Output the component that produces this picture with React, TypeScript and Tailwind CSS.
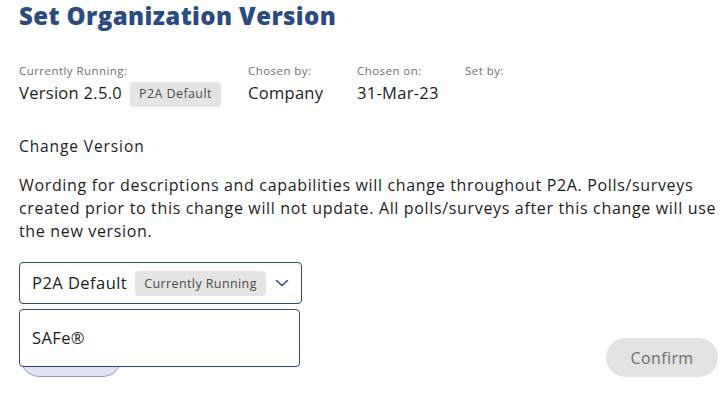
import type { ReactElement } from "react";

const font = { fontFamily: '"Open Sans", "Liberation Sans", sans-serif' };

function InfoCol({ label, width, children }: { label: string; width: string; children?: React.ReactNode }) {
  return (
    <div className={`flex flex-col ${width}`}>
      <span className="text-[11.5px] leading-[16px] tracking-[0.45px] text-[#6f6f6f]">{label}</span>
      <div className="mt-[2px] flex h-[25px] items-center text-[16.5px] tracking-[0.3px] text-[#1c1c1c]">{children}</div>
    </div>
  );
}

function Badge({ text }: { text: string }) {
  return (
    <span className="inline-flex h-[25px] items-center rounded-[4px] bg-[#e4e4e4] px-[9px] text-[12.5px] tracking-[0.4px] text-[#4a4a4a]">
      {text}
    </span>
  );
}

function App(): ReactElement {
  return (
    <div className="h-[395px] w-[728px] overflow-hidden bg-white px-[19px] pt-[1px] text-[#1c1c1c]" style={font}>
      <h1 className="text-[24px] font-extrabold leading-[29px] tracking-[0.4px] text-[#2b4a7f]">
        Set Organization Version
      </h1>

      {/* current version info */}
      <div className="mt-[33px] flex">
        <InfoCol label="Currently Running:" width="w-[229px]">
          <span>Version 2.5.0</span>
          <span className="ml-[8px]">
            <Badge text="P2A Default" />
          </span>
        </InfoCol>
        <InfoCol label="Chosen by:" width="w-[109px]">Company</InfoCol>
        <InfoCol label="Chosen on:" width="w-[108px]">31-Mar-23</InfoCol>
        <InfoCol label="Set by:" width="w-[100px]" />
      </div>

      <h2 className="mt-[29px] text-[15.5px] leading-[22px] tracking-[0.9px]">Change Version</h2>
      <div className="mt-[17px] whitespace-nowrap text-[16px] leading-[23px] tracking-[0.66px]">
        <p>Wording for descriptions and capabilities will change throughout P2A. Polls/surveys</p>
        <p>created prior to this change will not update. All polls/surveys after this change will use</p>
        <p>the new version.</p>
      </div>

      {/* select */}
      <div className="relative mt-[19px] w-[283px]">
        <div className="flex h-[42px] items-center rounded-[4px] border border-[#2e4a7d] pl-[12px] pr-[11px]">
          <span className="text-[16.5px] tracking-[0.45px]">P2A Default</span>
          <span className="ml-[8px]">
            <Badge text="Currently Running" />
          </span>
          <svg className="ml-auto" width="16" height="16" viewBox="0 0 16 16" fill="none">
            <path d="M2.5 5.5 8 10.5l5.5-5" stroke="#2e4a7d" strokeWidth="1.6" strokeLinecap="round" strokeLinejoin="round" />
          </svg>
        </div>
        <div className="absolute left-0 top-[47px] z-10 flex h-[58px] w-[281px] items-center rounded-[4px] border border-[#2e4a7d] bg-white pl-[12px] text-[16.5px] tracking-[0.4px]">
          SAFe®
        </div>
      </div>

      {/* actions */}
      <div className="mt-[34px] flex items-center justify-between">
        <button className="ml-[1px] h-[39px] w-[102px] rounded-full border border-[#8c9dc0] bg-[#dfe4ee] text-[16px] text-[#2b4a7f]">
          Cancel
        </button>
        <button className="mr-[-9px] h-[39px] w-[112px] rounded-full bg-[#e3e3e3] text-[16px] tracking-[0.4px] text-[#6e6e6e]">
          Confirm
        </button>
      </div>
    </div>
  );
}

export default App;
